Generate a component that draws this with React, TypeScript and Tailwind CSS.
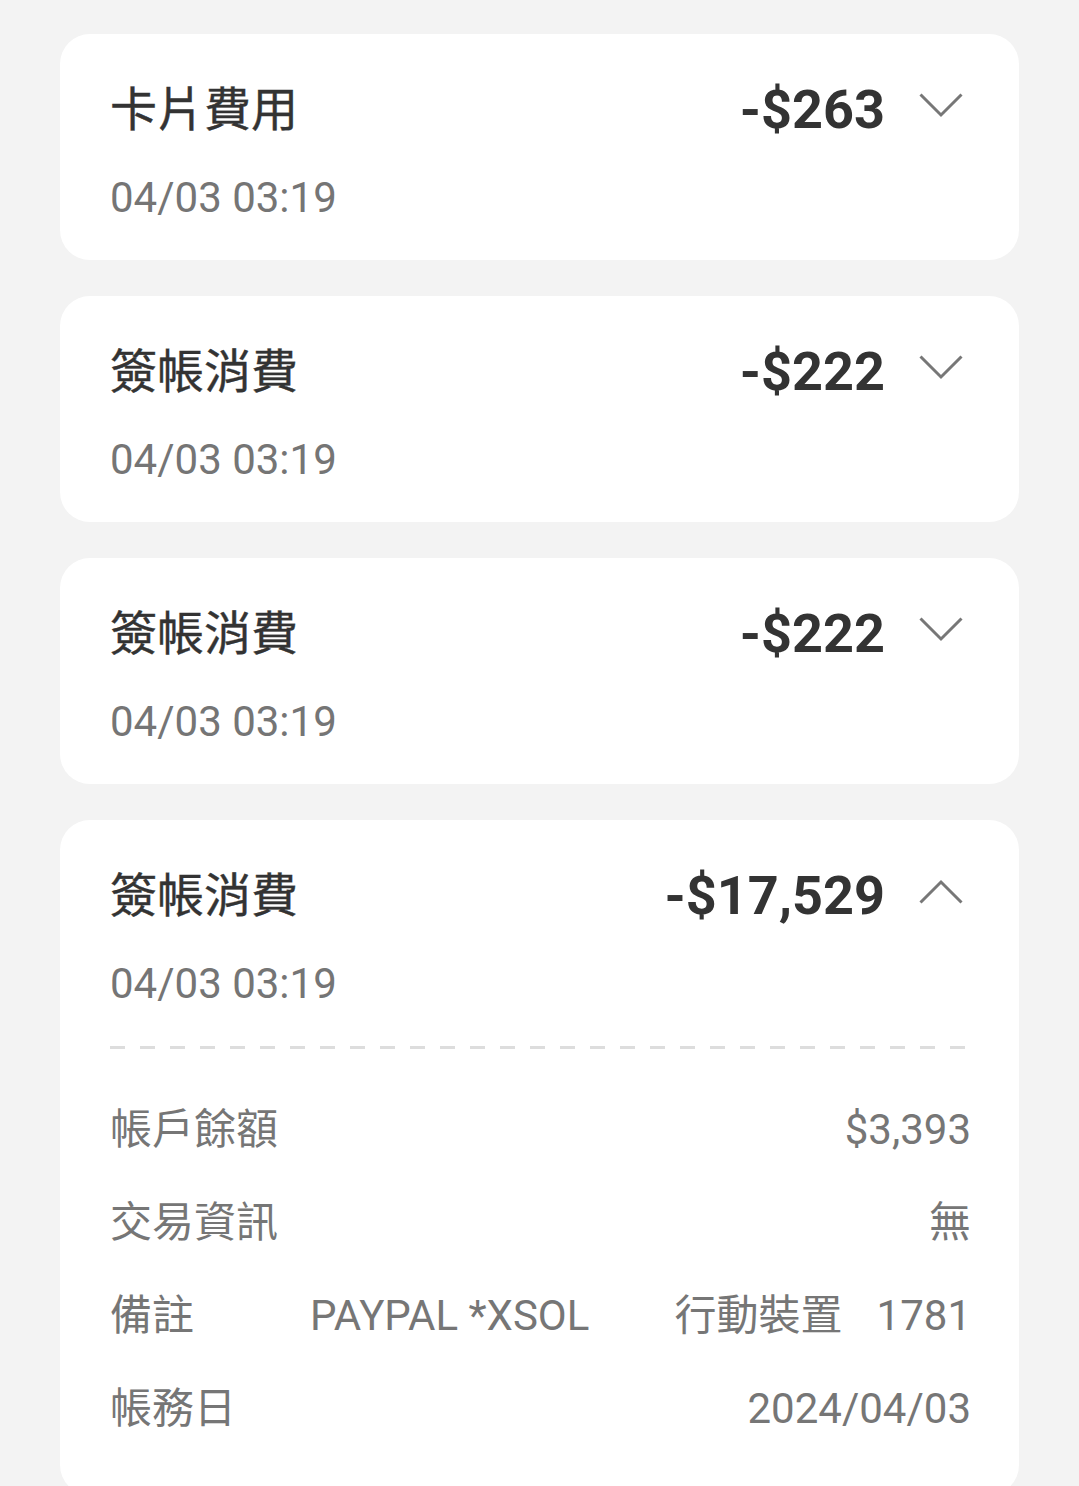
import { clsx } from 'clsx'

interface Txn {
  title: string
  amount: string
  time: string
  open?: boolean
}

const TXNS: Txn[] = [
  { title: '卡片費用', amount: '-$263', time: '04/03 03:19' },
  { title: '簽帳消費', amount: '-$222', time: '04/03 03:19' },
  { title: '簽帳消費', amount: '-$222', time: '04/03 03:19' },
  { title: '簽帳消費', amount: '-$17,529', time: '04/03 03:19', open: true },
]

function Chevron({ up }: { up?: boolean }) {
  return (
    <svg width="44" height="25" viewBox="0 0 44 25" className="ml-[34px] mr-[6px] mb-[9px] shrink-0">
      <path
        d={up ? 'M1.5 23.5 L22 3 L42.5 23.5' : 'M1.5 1.5 L22 22 L42.5 1.5'}
        fill="none"
        stroke="#777777"
        strokeWidth="3"
      />
    </svg>
  )
}

function DetailRow({ label, children }: { label: string; children: React.ReactNode }) {
  return (
    <div className="flex h-[93px] items-center text-[42px] leading-[48px] text-[#767676]">
      <span className="w-[200px] shrink-0">{label}</span>
      {children}
    </div>
  )
}

function TxnCard({ txn }: { txn: Txn }) {
  return (
    <div className={clsx('rounded-[30px] bg-white px-[50px] pt-[48px]', txn.open ? 'pb-[40px]' : 'pb-[38px]')}>
      <div className="flex h-[56px] items-center">
        <span className="flex-1 text-[47px] font-normal leading-[56px] text-[#333333] [-webkit-text-stroke:0.4px_#333333]">
          {txn.title}
        </span>
        <span className="text-[54px] font-bold leading-[56px] text-[#333333]">{txn.amount}</span>
        <Chevron up={txn.open} />
      </div>
      <div className="mt-[36px] text-[42px] leading-[48px] text-[#757575]">{txn.time}</div>

      {txn.open && (
        <>
          <div className="mt-[38px] h-[3px] bg-[repeating-linear-gradient(90deg,#dddddd_0_15px,transparent_15px_30px)]" />
          <div className="pt-[34px] -mr-[2px]">
            <DetailRow label="帳戶餘額">
              <span className="flex-1 text-right">$3,393</span>
            </DetailRow>
            <DetailRow label="交易資訊">
              <span className="flex-1 text-right">無</span>
            </DetailRow>
            <DetailRow label="備註">
              <span>PAYPAL *XSOL</span>
              <span className="flex-1" />
              <span>行動裝置</span>
              <span className="ml-[34px]">1781</span>
            </DetailRow>
            <DetailRow label="帳務日">
              <span className="flex-1 text-right">2024/04/03</span>
            </DetailRow>
          </div>
        </>
      )}
    </div>
  )
}

export default function App() {
  return (
    <div className="min-h-screen bg-[#f3f3f3] px-[60px] pt-[34px] pb-[40px] font-['Roboto','Noto_Sans_CJK_TC',sans-serif]">
      <div className="flex flex-col gap-[36px]">
        {TXNS.map((t, i) => (
          <TxnCard key={i} txn={t} />
        ))}
      </div>
    </div>
  )
}
